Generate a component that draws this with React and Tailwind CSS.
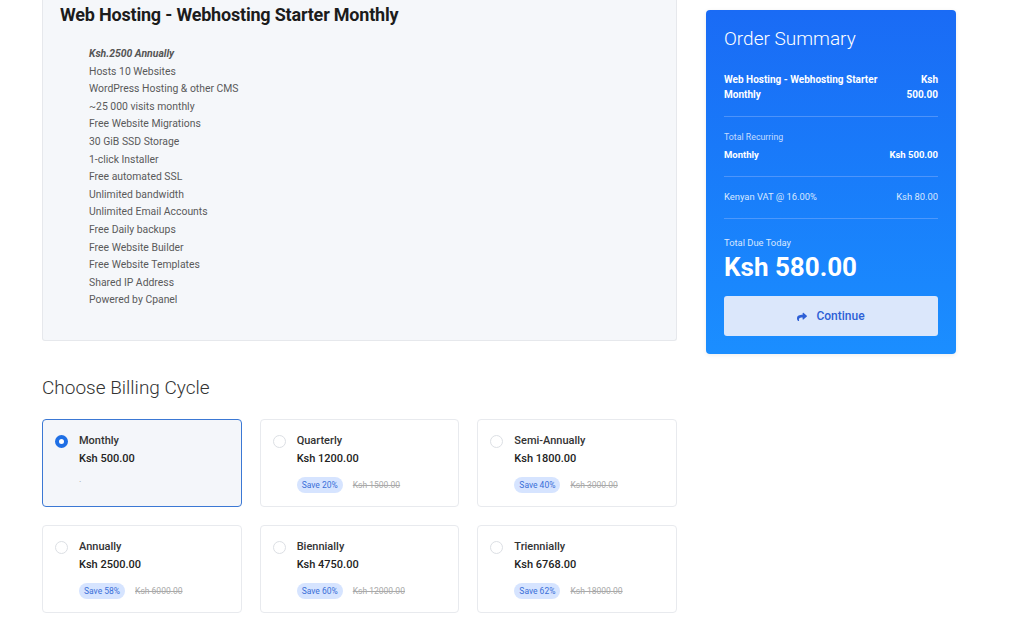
import React from "react";

const features = [
    "Hosts 10 Websites",
    "WordPress Hosting & other CMS",
    "~25 000 visits monthly",
    "Free Website Migrations",
    "30 GiB SSD Storage",
    "1-click Installer",
    "Free automated SSL",
    "Unlimited bandwidth",
    "Unlimited Email Accounts",
    "Free Daily backups",
    "Free Website Builder",
    "Free Website Templates",
    "Shared IP Address",
    "Powered by Cpanel",
];

const cycles = [
    { name: "Monthly", price: "Ksh 500.00", selected: true },
    { name: "Quarterly", price: "Ksh 1200.00", save: "Save 20%", old: "Ksh 1500.00" },
    { name: "Semi-Annually", price: "Ksh 1800.00", save: "Save 40%", old: "Ksh 3000.00" },
    { name: "Annually", price: "Ksh 2500.00", save: "Save 58%", old: "Ksh 6000.00" },
    { name: "Biennially", price: "Ksh 4750.00", save: "Save 60%", old: "Ksh 12000.00" },
    { name: "Triennially", price: "Ksh 6768.00", save: "Save 62%", old: "Ksh 18000.00" },
];

const CycleCard = ({ item }) => (
    <div
        className={`h-[88px] rounded-[4px] border flex pl-[12px] pt-[13px] ${
            item.selected ? "border-[#3b78d4] bg-[#f4f6fa]" : "border-[#e8eaee] bg-white"
        }`}
    >
        <div className="pt-[2px]">
            {item.selected ? (
                <div className="w-[13px] h-[13px] rounded-full border-[4px] border-[#1f6fe5] bg-white" />
            ) : (
                <div className="w-[13px] h-[13px] rounded-full border border-[#dcdfe4] bg-white" />
            )}
        </div>
        <div className="ml-[11px]">
            <div className="text-[11px] leading-[16px] font-medium text-[#333]">{item.name}</div>
            <div className="text-[11px] leading-[16px] font-medium text-[#222] mt-[2px]">{item.price}</div>
            {item.save ? (
                <div className="flex items-center gap-[10px] mt-[10px]">
                    <span className="h-[16px] px-[5px] rounded-full bg-[#d6e4ff] text-[#3a6fd8] text-[8.5px] leading-[16px]">
                        {item.save}
                    </span>
                    <span className="text-[8.5px] text-[#aaa] line-through">{item.old}</span>
                </div>
            ) : (
                <div className="text-[9px] text-[#999] mt-[6px]">.</div>
            )}
        </div>
    </div>
);

const App = () => {
    return (
        <div className="w-[1024px] h-[618px] bg-white overflow-hidden font-['Roboto',sans-serif] flex pl-[42px]">
            <div className="w-[635px]">
                <div className="bg-[#f5f7fa] border border-t-0 border-[#e6e8ec] rounded-b-[3px] pl-[17px] pt-[4px] pb-[31px]">
                    <h1 className="text-[18px] leading-[22px] font-bold text-[#1c1c1c] tracking-[-0.2px]">
                        Web Hosting - Webhosting Starter Monthly
                    </h1>
                    <ul className="pl-[29px] mt-[19px] text-[10.4px] leading-[17.6px] text-[#5a5a5a]">
                        <li className="italic font-bold text-[#555]">Ksh.2500 Annually</li>
                        {features.map((f, i) => (
                            <li key={i}>{f}</li>
                        ))}
                    </ul>
                </div>

                <h2 className="mt-[35px] text-[19px] leading-[24px] font-light text-[#333]">Choose Billing Cycle</h2>

                <div className="grid grid-cols-3 gap-x-[18px] gap-y-[18px] mt-[19px]">
                    {cycles.map((c, i) => (
                        <CycleCard key={i} item={c} />
                    ))}
                </div>
            </div>

            <div className="ml-[29px] mt-[10px] w-[250px] h-[344px] rounded-[4px] bg-gradient-to-b from-[#1a6bf5] to-[#1b8eff] px-[18px] pt-[17px] text-white shadow-[0_1px_4px_rgba(0,0,0,0.08)]">
                <div className="text-[19px] leading-[24px] font-light">Order Summary</div>

                <div className="flex justify-between mt-[21px] text-[10px] leading-[15px] font-bold">
                    <div className="w-[170px]">Web Hosting - Webhosting Starter Monthly</div>
                    <div className="w-[40px] text-right">Ksh 500.00</div>
                </div>

                <div className="border-t border-[#4d93fa] mt-[14px]" />

                <div className="mt-[14px] text-[8.8px] leading-[12px] text-[#c5dcff]">Total Recurring</div>
                <div className="flex justify-between text-[9.5px] leading-[15px] font-bold mt-[4px]">
                    <span>Monthly</span>
                    <span>Ksh 500.00</span>
                </div>

                <div className="border-t border-[#4d95fb] mt-[14px]" />

                <div className="flex justify-between mt-[14px] text-[9.4px] leading-[12px] text-[#d8e7ff]">
                    <span>Kenyan VAT @ 16.00%</span>
                    <span>Ksh 80.00</span>
                </div>

                <div className="border-t border-[#4d98fc] mt-[15px]" />

                <div className="mt-[18px] text-[9.4px] leading-[12px] text-[#d8e7ff]">Total Due Today</div>
                <div className="text-[26px] leading-[30px] font-bold mt-[3px]">Ksh 580.00</div>

                <button className="mt-[14px] w-full h-[40px] rounded-[3px] bg-[#dbe7fb] text-[#2d5fd6] text-[12px] font-medium flex items-center justify-center gap-[9px]">
                    <svg width="10" height="9" viewBox="0 0 512 448" fill="currentColor">
                        <path d="M503.7 189.8L327.7 37.9C312.3 24.6 288 35.4 288 56v80C127.4 137.8 0 170 0 322.3c0 61.4 39.6 122.3 83.3 154.1 13.7 9.9 33.1-2.5 28.1-18.6C66.1 312.8 132.9 274.3 288 272.1V360c0 20.7 24.3 31.4 39.7 18.2l176-152c11.1-9.6 11.1-26.8 0-36.4z" />
                    </svg>
                    Continue
                </button>
            </div>
        </div>
    );
};

export default App;
